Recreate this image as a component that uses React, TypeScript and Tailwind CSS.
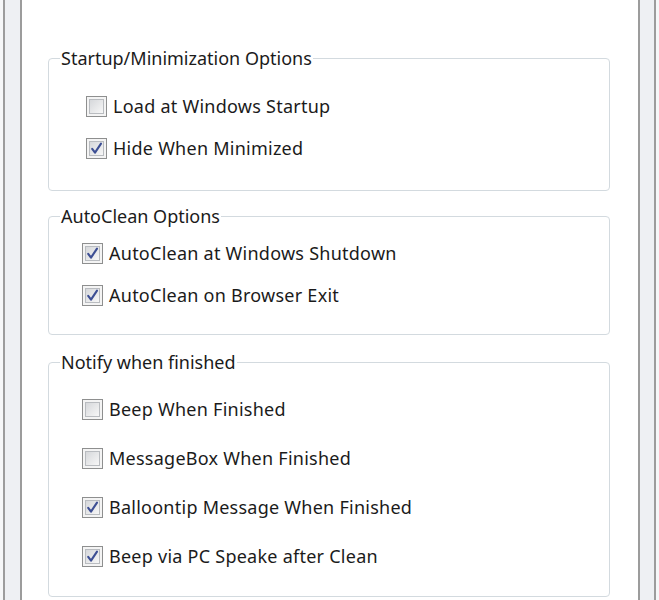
import React from "react";

function Check({ checked }: { checked: boolean }) {
  return (
    <div className="w-[21px] h-[21px] border border-[#8e8f8f] bg-[#f4f4f4] p-[2px] shrink-0">
      <div className="w-full h-full border border-[#b9bcc0] bg-gradient-to-br from-[#d6d8db] to-[#f7f7f7] flex items-center justify-center">
        {checked && (
          <svg width="13" height="13" viewBox="0 0 13 13">
            <path d="M2.2 6.8 L5 10.6 L11 1.6" fill="none" stroke="#3d4f94" strokeWidth="2.1" strokeLinejoin="round" strokeLinecap="round" />
          </svg>
        )}
      </div>
    </div>
  );
}

function Row({ checked, label }: { checked: boolean; label: string }) {
  return (
    <div className="flex items-center h-[24px] gap-[6px]">
      <Check checked={checked} />
      <span className="tracking-[0.25px]">{label}</span>
    </div>
  );
}

export default function App() {
  return (
    <div
      className="w-[659px] h-[600px] overflow-hidden flex bg-white text-[#1b1b1b] text-[18px] leading-[24px]"
      style={{ fontFamily: '"Noto Sans", "Open Sans", sans-serif' }}
    >
      <div className="flex h-full shrink-0">
        <div className="w-[3px] bg-[#f6f7f8]" />
        <div className="w-[2px] bg-[#9c9c9c]" />
        <div className="w-[15px] bg-[#eef0f3]" />
        <div className="w-[2px] bg-[#9c9c9c]" />
      </div>
      <div className="flex-1 bg-white pl-[26px] pr-[28px]">
        <fieldset className="mt-[46px] border border-[#d3dadf] rounded-[4px]">
          <legend className="ml-[11px] px-[1px]">Startup/Minimization Options</legend>
          <div className="pl-[37px] pt-[24px] pb-[30px] flex flex-col gap-[18px]">
            <Row checked={false} label="Load at Windows Startup" />
            <Row checked={true} label="Hide When Minimized" />
          </div>
        </fieldset>
        <fieldset className="mt-[13px] border border-[#d3dadf] rounded-[4px]">
          <legend className="ml-[11px] px-[1px]">AutoClean Options</legend>
          <div className="pl-[33px] pt-[13px] pb-[27px] flex flex-col gap-[18px]">
            <Row checked={true} label="AutoClean at Windows Shutdown" />
            <Row checked={true} label="AutoClean on Browser Exit" />
          </div>
        </fieldset>
        <fieldset className="mt-[15px] border border-[#d3dadf] rounded-[4px]">
          <legend className="ml-[11px] px-[1px]">Notify when finished</legend>
          <div className="pl-[33px] pt-[23px] pb-[28px] flex flex-col gap-[25px]">
            <Row checked={false} label="Beep When Finished" />
            <Row checked={false} label="MessageBox When Finished" />
            <Row checked={true} label="Balloontip Message When Finished" />
            <Row checked={true} label="Beep via PC Speake after Clean" />
          </div>
        </fieldset>
      </div>
      <div className="flex h-full shrink-0">
        <div className="w-[2px] bg-[#9c9c9c]" />
        <div className="w-[14px] bg-[#eef0f3]" />
        <div className="w-[2px] bg-[#9c9c9c]" />
        <div className="w-[3px] bg-[#f6f7f8]" />
      </div>
    </div>
  );
}
